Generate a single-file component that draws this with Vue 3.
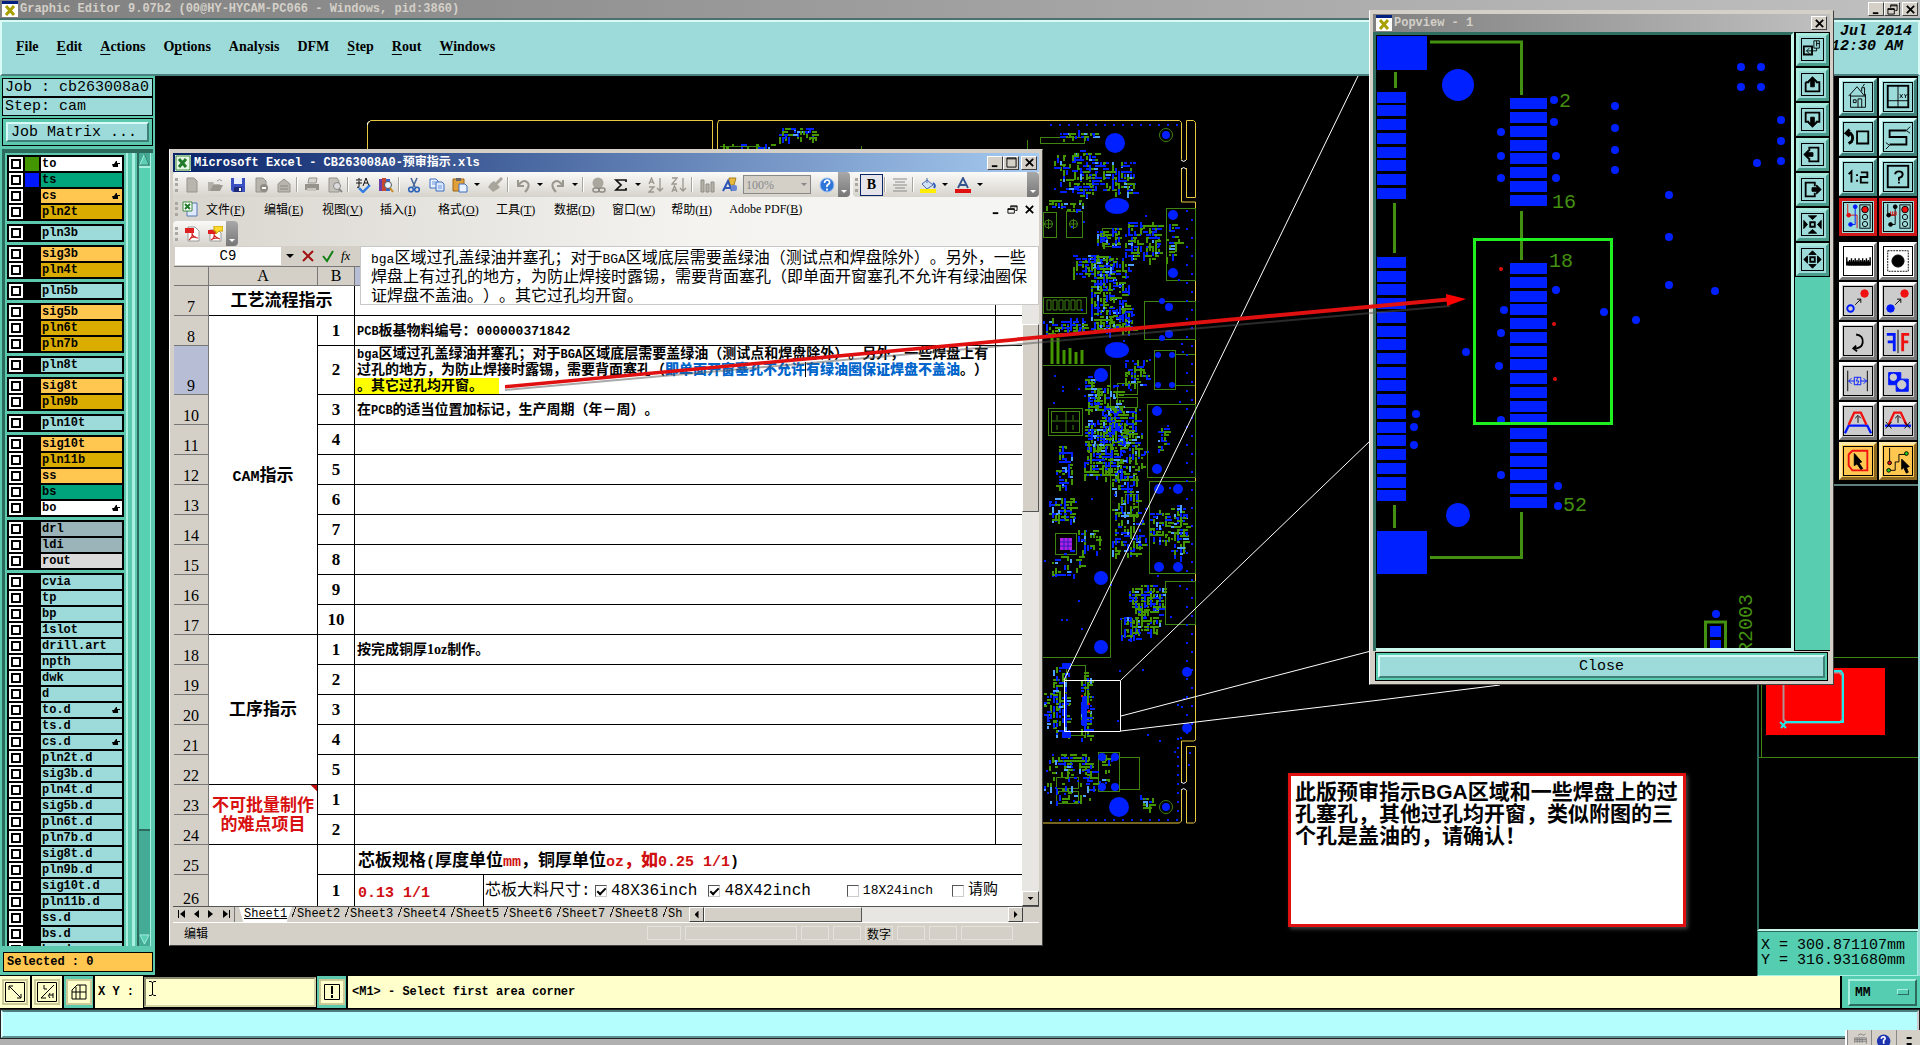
<script setup>
import { ref } from 'vue'

const menus = [
  ['', 'F', 'ile'], ['', 'E', 'dit'], ['', 'A', 'ctions'], ['O', 'p', 'tions'], ['Analysis', '', ''],
  ['DFM', '', ''], ['', 'S', 'tep'], ['', 'R', 'out'], ['', 'W', 'indows'],
]

const layerGroups = [
  [['to', 'white', 1, '#449600'], ['ts', 'green', 0, '#0018ff'], ['cs', 'amber', 1], ['pln2t', 'gold']],
  [['pln3b', 'aqua']],
  [['sig3b', 'amber'], ['pln4t', 'gold']],
  [['pln5b', 'aqua']],
  [['sig5b', 'amber'], ['pln6t', 'gold'], ['pln7b', 'gold']],
  [['pln8t', 'aqua']],
  [['sig8t', 'amber'], ['pln9b', 'gold']],
  [['pln10t', 'aqua']],
  [['sig10t', 'amber'], ['pln11b', 'gold'], ['ss', 'amber'], ['bs', 'green'], ['bo', 'white', 1]],
  [['drl', 'slate'], ['ldi', 'slate'], ['rout', 'silver']],
  ['cvia', 'tp', 'bp', '1slot', 'drill.art', 'npth', 'dwk', 'd', 'to.d', 'ts.d', 'cs.d', 'pln2t.d', 'sig3b.d',
    'pln4t.d', 'sig5b.d', 'pln6t.d', 'pln7b.d', 'sig8t.d', 'pln9b.d', 'sig10t.d', 'pln11b.d', 'ss.d', 'bs.d', 'bo.d']
    .map((n) => [n, 'aqua', n === 'to.d' || n === 'cs.d' ? 1 : 0]),
]

const page = '<path d="M3 1h7l3 3v11H3z" fill="#b8b5ae" stroke="#96938c"/>'
const icons = {
  new: page,
  open: '<path d="M1 5h5l1 2h6v7H1z" fill="#b4b1aa"/><path d="M3 14l3-6h10l-3 6z" fill="#9a978f"/><path d="M10 4q3-3 5 0" stroke="#999" fill="none"/>',
  save: '<path d="M1 1h14v14H3l-2-2z" fill="#3a4fc0"/><path d="M4 1h8v6H4z" fill="#e8ecff"/><path d="M4 10h8v5H4z" fill="#1f2a78"/><path d="M9 11h2v3H9z" fill="#fff"/>',
  perm: page + '<circle cx="11" cy="11" r="4" fill="#8e8b84"/><path d="M9 11h4" stroke="#fff" stroke-width="2"/>',
  mail: '<path d="M2 7l6-5 6 5v8H2z" fill="#b8b5ae" stroke="#96938c"/><path d="M4 9h8M4 12h8" stroke="#8a877f"/>',
  print: '<path d="M5 1h8l-1 5H4z" fill="#d8d6d0" stroke="#96938c"/><path d="M1 7h14v6H1z" fill="#96938c"/><path d="M3 11h9v3H3z" fill="#c8c5be"/>',
  preview: '<path d="M2 1h8l2 3v11H2z" fill="#c4c1ba" stroke="#96938c"/><circle cx="10" cy="9" r="3.5" fill="#ddd" stroke="#888"/><path d="M12 12l3 3" stroke="#888" stroke-width="2"/>',
  spell: '<path d="M1 3h6M4 1v2M1 6h6M4 4v6q-1 1-2 0" stroke="#111" fill="none"/><path d="M8 9l3-8 3 8M9 6h4" stroke="#111" fill="none"/><path d="M4 11l4 4 7-7" stroke="#2f7be0" stroke-width="2.4" fill="none"/>',
  research: '<path d="M1 2h3v12H1z" fill="#6b3fa8"/><path d="M4 1h4v13H4z" fill="#c8452e"/><path d="M8 2h4v12H8z" fill="#3465c8"/><circle cx="10" cy="8" r="3.5" fill="#e8f4ff" stroke="#555"/><path d="M12 11l3 4" stroke="#c88a1e" stroke-width="2"/>',
  cut: '<path d="M5 1l4 9M11 1L7 10" stroke="#4a6898" stroke-width="1.6"/><circle cx="5" cy="12.500" r="2.300" fill="none" stroke="#2b62b8" stroke-width="1.600"/><circle cx="11" cy="12.500" r="2.300" fill="none" stroke="#2b62b8" stroke-width="1.600"/>',
  copy: '<path d="M1 2h6l2 2v7H1z" fill="#eaf2ff" stroke="#3c6fc0"/><path d="M7 5h6l2 2v7H7z" fill="#dbe8ff" stroke="#3c6fc0"/><path d="M3 5h4M3 7h4M9 9h4M9 11h4" stroke="#6f98d8"/>',
  paste: '<path d="M1 2h11v12H1z" fill="#e2a03a" stroke="#9c6412"/><path d="M4 1h5v3H4z" fill="#666"/><path d="M7 7h6l2 2v6H7z" fill="#e9f1ff" stroke="#3c6fc0"/>',
  brush: '<path d="M15 1l-6 6" stroke="#a8a59d" stroke-width="3"/><path d="M4 6l3-2 6 6-2 2-5 3-5-5z" fill="#a8a59d"/>',
  undo: '<path d="M3 3v6h6M3 9q5-8 10-3 2 4-3 9" stroke="#9a978f" stroke-width="2" fill="none"/>',
  redo: '<path d="M13 3v6H7M13 9Q8 1 3 6q-2 4 3 9" stroke="#9a978f" stroke-width="2" fill="none"/>',
  link: '<circle cx="8" cy="6" r="5.500" fill="#aaa79f"/><rect x="3" y="11" width="6" height="4" rx="2" fill="none" stroke="#8d8a83" stroke-width="1.500"/><rect x="9" y="11" width="6" height="4" rx="2" fill="none" stroke="#8d8a83" stroke-width="1.500"/>',
  sigma: '<path d="M13 5V3H3l5 5-5 5h10v-2" stroke="#111" stroke-width="1.700" fill="none"/>',
  sortA: '<path d="M1 7l2.500-6L6 7M2 5h3M1 10h5l-5 5h5M12 1v13M9 11l3 3 3-3" stroke="#9a978f" stroke-width="1.300" fill="none"/>',
  sortZ: '<path d="M1 1h5L1 7h5M1 15l2.500-6L6 15M2 13h3M12 1v13M9 11l3 3 3-3" stroke="#9a978f" stroke-width="1.300" fill="none"/>',
  chart: '<path d="M2 3h3v12H2zM7 7h3v8H7zM12 5h3v10h-3z" fill="#b5b2aa" stroke="#8f8c85"/>',
  draw: '<path d="M7 1h7l-2 7H7z" fill="#e8b93c" stroke="#a88020"/><path d="M1 14l5-10 4 10M3 11h5" stroke="#2d56b8" stroke-width="2" fill="none"/><rect x="9" y="8" width="6" height="6" rx="2" fill="#6a86d0"/>',
  help: '<circle cx="8" cy="8" r="7" fill="#2f74d8" stroke="#9cc2f2"/><path d="M5.500 6q0-3 3-3 2.500.5 2 3-.5 1-2.500 2.500V10M8 11.500v2" stroke="#fff" stroke-width="1.700" fill="none"/>',
  align: '<path d="M1 2h14M3 5h10M1 8h14M3 11h10M1 14h14" stroke="#8a8a8a"/>',
  fill: '<path d="M7 1v5M2 7l5-4 6 5-6 4z" fill="#cfe0f8" stroke="#4d6ea8"/><path d="M13 6q3 2 1 5" stroke="#2d5bc0" stroke-width="2" fill="none"/><path d="M0 12h16v4H0z" fill="#ffee00"/>',
  color: '<path d="M3 11L8 1l5 10M5 8h6" stroke="#35538c" stroke-width="1.800" fill="none"/><path d="M0 12h16v4H0z" fill="#e01010"/>',
  pdf: '<path d="M4 1h7l4 4v10H4z" fill="#fff" stroke="#999"/><path d="M1 2h9v5H1z" fill="#e02020"/><path d="M8 7q1 4-3 7M8 8q2 4 6 4M6 12q3-1 6-1" stroke="#d02020" fill="none" stroke-width="1.200"/>',
  pdfMail: '<path d="M3 4h8l3 3v8H3z" fill="#fff" stroke="#999"/><path d="M1 4h8v4H1z" fill="#e02020"/><path d="M7 8q1 4-3 6M7 9q2 3 6 4M5 13q3-1 6-1" stroke="#d02020" fill="none" stroke-width="1.200"/><path d="M7 0h9v5h-4l-3 3V5H7z" fill="#ffd92e" stroke="#c8a100"/>',
}
const bar = ['grip', 'new', 'open', 'save', 'perm', 'mail', '|', 'print', 'preview', '|', 'spell', 'research', '|', 'cut',
  'copy', 'paste', 'v', 'brush', '|', 'undo', 'v', 'redo', 'v', '|', 'link', 'sigma', 'v', 'sortA', 'sortZ', '|', 'chart', 'draw']
const xlMenus = [['文件', 'F'], ['编辑', 'E'], ['视图', 'V'], ['插入', 'I'], ['格式', 'O'], ['工具', 'T'], ['数据', 'D'], ['窗口', 'W'], ['帮助', 'H'], ['Adobe PDF', 'B']]
const sheets = ['Sheet1', 'Sheet2', 'Sheet3', 'Sheet4', 'Sheet5', 'Sheet6', 'Sheet7', 'Sheet8']

const rows = []
for (let r = 10; r <= 24; r++) {
  const num = r <= 17 ? r - 7 : r <= 22 ? r - 17 : r - 22
  rows.push({
    r, num,
    head: r === 18 ? '工序指示' : r === 23 ? '不可批量制作的难点项目' : '',
    span: r === 18 ? 5 : 2,
    text: r === 18 ? '按完成铜厚1oz制作。' : '',
  })
}

const popTools = [
  ['Zoom area', '<path d="M2 8h9v9H2z" stroke-width="2"/><path d="M13 2h6v8h-6zM16 5h3M16 2v6M13 13h3v-3M13 13H5M8 10l-3 3 3 3"/>'],
  ['Pan up', '<path d="M4 9h4M15 9h4v10H4V9" stroke-width="2"/><path d="M11.500 3l5 5h-3v6h-4V8h-3z" fill="#000"/>'],
  ['Pan down', '<path d="M8 14H4V4h15v10h-4" stroke-width="2"/><path d="M11.500 20l5-5h-3V9h-4v6h-3z" fill="#000"/>'],
  ['Pan left', '<path d="M8 8V4h10v15H8v-4" stroke-width="2"/><path d="M2 11.500l5-5v3h5v4H7v3z" fill="#000"/>'],
  ['Pan right', '<path d="M14 8V4H4v15h10v-4" stroke-width="2"/><path d="M21 11.500l-5-5v3h-5v4h5v3z" fill="#000"/>'],
  ['Zoom in', '<path d="M9 9h5v5H9z" stroke-width="2"/><path d="M7 2h9l-4.500 4zM7 21h9l-4.500-4zM2 7v9l4-4.500zM21 7v9l-4-4.500z" fill="#000"/>'],
  ['Zoom out', '<path d="M9 9h5v5H9z" stroke-width="2"/><path d="M7.500 6h8l-4-4zM7.500 17h8l-4 4zM6 7.500v8l-4-4zM17 7.500v8l4-4z" fill="#000"/>'],
]

const light = '<rect x="17" y="2" width="11" height="25" fill="#9cdbda"/><circle cx="22.500" cy="7" r="3.500" fill="#f01010"/><circle cx="22.500" cy="15" r="2.800"/><circle cx="22.500" cy="22.500" r="2.800"/>'
const tools = [
  ['Home', 'aqua', '<path d="M5 14l9-10 8 10M7 12v14h16V12M7 14h16M15 26v-9h4v9M10 18h3v3h-3zM19 9V5h3v8M20 4l2-3"/>'],
  ['Overview', 'aqua', '<rect x="4" y="3" width="22" height="23" stroke-width="2"/><path d="M15 3v23M4 19h22"/><path d="M17 12l3 4M20 12l-3 4M22 12l1 2 2-2M23 14v2"/>'],
  ['Previous view', 'aqua', '<path d="M14 9h12v13H14z" stroke-width="2"/><path d="M3 11h4q4 4 1 9l-3 2M6 7l-4 4 4 3" stroke-width="3"/>'],
  ['Snake route', 'aqua', '<path d="M24 8H6v7h18v8H6" stroke-width="2"/><path d="M24 8l4-4M24 8l4 3M6 24l-4-3M6 24l-4 4"/>'],
  ['Scale', 'aqua', '<path d="M5 12l3-3v12M14 12v2M14 18v2M18 10h7v5h-7v6h8" stroke-width="2"/>'],
  ['Query', 'aqua', '<rect x="4" y="3" width="22" height="23" stroke-width="2"/><path d="M12 12q0-3 4-3t4 3-4 4v3M16 20v2" stroke-width="2"/>'],
  ['Online DRC', 'red aqua', '<path d="M4 1v12h10v14" stroke="#e01010"/><path d="M12 4v19H7" stroke="#0018ff"/><circle cx="12" cy="4" r="2" fill="#0018ff" stroke="#0018ff"/><circle cx="5" cy="13" r="2" fill="#e01010" stroke="#e01010"/><circle cx="7" cy="23" r="2" fill="#0018ff" stroke="#0018ff"/>' + light],
  ['Trace DRC', 'red aqua', '<path d="M4 1v12h8M12 4v19H7"/><path d="M7 9v4h6V9M9 9v4M11 9v4" stroke="#e01010"/><circle cx="12" cy="4" r="2" fill="#000"/><circle cx="5" cy="13" r="2" fill="#000"/><circle cx="7" cy="23" r="2" fill="#000"/>' + light],
  ['Measure', 'white', '<path d="M3 11v8h25v-8M8 12v8M12 12v8M16 12v8M20 12v8M24 12v8M6 14v6M10 14v6M14 14v6M18 14v6M22 14v6M26 14v6" stroke-width="1.500"/><path d="M3 16h25v3H3z" fill="#000"/>'],
  ['Select feature', 'white', '<path d="M4 4h22v22H4z" stroke-dasharray="2 1"/><circle cx="15" cy="15" r="6.500" fill="#000"/>'],
  ['Move', 'gray', '<path d="M12 19l6-6M14 13h4v4"/><circle cx="22" cy="7" r="4" fill="#f01010" stroke="#f01010"/><circle cx="7" cy="23" r="3.500" stroke="#0018ff" stroke-width="2"/>'],
  ['Copy', 'gray', '<path d="M12 19l6-6M14 13h4v4"/><circle cx="22" cy="7" r="4" fill="#f01010" stroke="#f01010"/><circle cx="7" cy="23" r="4" fill="#0018ff" stroke="#0018ff"/>'],
  ['Rotate', 'gray', '<path d="M13 8q8 1 7 9-1 6-9 6M13 20l-3 3 4 3" stroke-width="2"/>'],
  ['Mirror', 'gray', '<path d="M15 3v25"/><path d="M3 8h8v18M4 16h7" stroke="#0018ff" stroke-width="3"/><path d="M27 8h-7v18M26 16h-6" stroke="#f01010" stroke-width="3"/>'],
  ['Stretch', 'gray', '<path d="M4 4v22M25 4v22"/><path d="M11 11h7v8h-7zM11 15H5M18 15h7M8 12l-3 3 3 3M21 12l3 3-3 3M15 11l-2 4h3l-2 4" stroke="#0018ff"/>'],
  ['Substitute', 'gray', '<path d="M5 6h13v7h8v13H13v-7H5z" fill="#0018ff" stroke="#0018ff"/><circle cx="10" cy="11" r="3.500" fill="#ccc" stroke="#ccc"/><circle cx="19" cy="19" r="4.500" fill="#ccc" stroke="#ccc"/>'],
  ['Move line', 'gray', '<path d="M1 28l4-8h20l4 8M5 20h20" stroke="#0018ff" stroke-width="2.500"/><path d="M5 19l6-13h7l6 13" stroke="#f01010" stroke-width="2.500"/><path d="M15 17v-7M12 12l3-3 3 3"/>'],
  ['Move corner', 'gray', '<path d="M1 20h28" stroke="#0018ff" stroke-width="2.500"/><path d="M5 19l6-13h7l6 13" stroke="#f01010" stroke-width="2.500"/><path d="M15 17v-7M12 12l3-3 3 3M2 16l6 7M8 16l-6 7M22 16l6 7M28 16l-6 7"/>'],
  ['Area select', 'amber', '<path d="M9 4h16v21H9l-4-5V8z" stroke="#f01010" stroke-width="2"/><path d="M11 7l8 9-3 1 4 6-2 1-4-6-3 2z" fill="#000"/>'],
  ['Net select', 'amber', '<path d="M6 1v16M6 25h6v-9h4V8h8"/><circle cx="6" cy="17" r="2" fill="#e01010"/><circle cx="5" cy="25" r="2" fill="#20d020"/><circle cx="24" cy="7" r="2" fill="#20d020"/><path d="M19 13l8 8-3 1 2 5-2 1-3-6-2 2z" fill="#000"/>'],
]

/* Component placement of the board: seeded so that it is the same on each load */
let seed = 7
const rnd = () => (seed = (seed * 16807) % 2147483647) / 2147483647
const zones = [
  [1060, 130, 36, 8, 26], [1074, 150, 22, 44, 110], [1054, 155, 20, 36, 34], [1100, 162, 34, 30, 100], [1125, 222, 34, 36, 130],
  [1097, 228, 10, 16, 36], [1112, 228, 6, 18, 26], [1073, 255, 24, 20, 60], [1091, 256, 20, 74, 200], [1110, 258, 18, 70, 100],
  [1043, 318, 40, 16, 60], [1116, 305, 16, 26, 60], [1122, 360, 24, 24, 50], [1085, 376, 14, 34, 80], [1095, 385, 26, 30, 60],
  [1102, 408, 34, 22, 80], [1085, 420, 42, 26, 220], [1084, 444, 38, 32, 150], [1120, 430, 24, 40, 80], [1056, 446, 14, 42, 50],
  [1112, 470, 24, 46, 100], [1112, 520, 32, 34, 80], [1049, 498, 24, 22, 80], [1052, 550, 30, 26, 36], [1078, 530, 22, 22, 30],
  [1129, 585, 34, 24, 130], [1135, 608, 24, 24, 80], [1121, 617, 16, 22, 40], [1053, 664, 14, 70, 100], [1081, 672, 10, 66, 80],
  [1044, 690, 12, 36, 30], [1049, 754, 40, 18, 90], [1044, 774, 46, 28, 40], [1087, 765, 6, 26, 20], [1140, 795, 12, 12, 20],
  [779, 128, 36, 10, 50], [720, 144, 50, 4, 20], [1043, 200, 40, 10, 30],
  [1158, 428, 7, 22, 26], [1150, 510, 18, 30, 60], [1171, 505, 14, 50, 90], [1166, 224, 12, 34, 30], [1102, 755, 8, 28, 16],
]
const parts = []
for (const [x, y, w, h, n] of zones) {
  for (let i = 0; i < n; i++) {
    const c = rnd()
    const wide = rnd() > 0.5
    parts.push({
      x: x + 3 * Math.round(rnd() * w / 3), y: y + 3 * Math.round(rnd() * h / 3),
      w: wide ? 2 + Math.round(rnd() * 5) : 2, h: wide ? 2 : 2 + Math.round(rnd() * 5),
      f: c < 0.52 ? '#449600' : c < 0.9 ? '#0020ff' : '#4fa0ff',
    })
  }
}
for (let y = 210; y < 735; y += 9) parts.push({ x: y % 2 ? 1191 : 1186, y, w: 2, h: 2, f: '#0020ff' })
for (let x = 1050; x < 1182; x += 9) parts.push({ x, y: 819, w: 2, h: 2, f: '#0020ff' }, { x, y: 124, w: 2, h: 2, f: '#0020ff' })
for (let y = 738; y < 815; y += 9) parts.push({ x: 1177, y, w: 2, h: 2, f: '#0020ff' })
for (let i = 0; i < 70; i++) parts.push({ x: Math.round(1044 + rnd() * 145), y: Math.round(210 + rnd() * 590), w: 2, h: 2, f: '#0020ff' })

const discs = [
  [1115, 143, 10, 10], [1166, 135, 4, 4], [1117, 206, 12, 8], [1117, 350, 12, 8], [1101, 375, 7, 7], [1173, 215, 5, 5], [1173, 273, 5, 5],
  [1162, 301, 3, 3], [1169, 307, 4, 4], [1169, 334, 4, 4], [1162, 338, 3, 3], [1158, 355, 3, 3], [1172, 355, 3, 3], [1158, 385, 3, 3],
  [1172, 385, 3, 3], [1157, 411, 5, 5], [1157, 469, 5, 5], [1159, 489, 5, 5], [1178, 489, 5, 5], [1159, 567, 5, 5], [1178, 567, 5, 5],
  [1101, 578, 7, 7], [1101, 647, 7, 7], [1187, 672, 5, 5], [1187, 728, 5, 5], [1119, 807, 10, 10], [1166, 807, 4, 4],
  [1102, 757, 4, 4], [1115, 757, 4, 4], [1102, 787, 4, 4], [1115, 787, 4, 4],
]
const outlines = [
  [1166, 208, 29, 72], [1144, 301, 51, 38], [1154, 350, 21, 39], [1147, 404, 48, 73], [1048, 408, 34, 27], [1051, 411, 28, 21], [1043, 297, 43, 16],
  [1066, 211, 16, 26], [1043, 212, 13, 25], [1102, 228, 13, 18], [1149, 481, 46, 92], [1165, 581, 30, 43], [1066, 665, 19, 70],
  [1098, 752, 21, 39], [1119, 757, 20, 32], [1056, 777, 22, 11], [1056, 791, 22, 12], [1055, 533, 21, 21], [1117, 383, 20, 11],
  [1117, 397, 20, 10], [1125, 494, 13, 20], [1121, 618, 11, 18], [1040, 137, 44, 6],
]

const leftPads = [92, 105, 119, 133, 147, 160, 174, 188]
const midPads = [98, 112, 126, 140, 153, 167, 181, 195]
for (let i = 0; i < 18; i++) {
  leftPads.push(257 + Math.round(i * 13.72))
  midPads.push(263 + Math.round(i * 13.76))
}
const vias = [
  [1554, 100], [1554, 122], [1501, 132], [1501, 156], [1556, 156], [1501, 178], [1556, 178], [1615, 106], [1615, 128], [1615, 150],
  [1615, 170], [1741, 67], [1761, 67], [1741, 87], [1761, 87], [1781, 120], [1781, 141], [1781, 161], [1757, 163], [1669, 195],
  [1669, 237], [1669, 285], [1715, 291], [1636, 320], [1604, 312], [1556, 290], [1504, 310], [1501, 333], [1466, 352], [1499, 366],
  [1416, 414], [1414, 427], [1414, 445], [1501, 420], [1501, 475], [1558, 486], [1558, 506], [1716, 614],
]
const units = ref('MM')
const coord = ref('')
const zoom = ref('100%')
</script>

<template>
  <div class="desktop">
    <header class="app-title">
      <svg class="x-icon" viewBox="0 0 16 16"><path d="M0 0h16v16H0z" fill="#fff" /><path d="M0 0h16v3H0z" fill="#002080" /><path d="M4 5l8 9M12 5l-8 9" stroke="#a8a000" stroke-width="3" /></svg>
      <span>Graphic Editor 9.07b2 (00@HY-HYCAM-PC066 - Windows, pid:3860)</span>
      <span class="win-btns">
        <button aria-label="Minimize"><svg viewBox="0 0 12 12"><path d="M2 9h6v2H2z" /></svg></button>
        <button aria-label="Restore"><svg viewBox="0 0 12 12"><path d="M4 1h7v6H9M4 1v3M4 2h7M1 5h7v6H1zM1 6h7" fill="none" stroke="#000" /></svg></button>
        <button class="apart" aria-label="Close window"><svg viewBox="0 0 12 12"><path d="M2 2l8 8M10 2l-8 8" stroke="#000" stroke-width="2" /></svg></button>
      </span>
    </header>

    <nav class="app-menu">
      <a v-for="m in menus" :key="m.join('')" href="#">{{ m[0] }}<u v-if="m[1]">{{ m[1] }}</u>{{ m[2] }}</a>
      <div class="clock"><span>&nbsp;Jul 2014</span><span>12:30 AM</span></div>
    </nav>

    <main class="body">
      <aside class="left">
        <div class="info">Job : cb263008a0</div>
        <div class="info">Step: cam</div>
        <div class="matrix"><button>Job Matrix ...</button></div>
        <div class="layer-area">
          <div class="layer-list">
            <div v-for="(g, gi) in layerGroups" :key="gi" class="group">
              <div v-for="l in g" :key="l[0]" class="layer">
                <span class="tick"><input :id="'l-' + l[0]" type="checkbox" /></span>
                <span class="swatch" :style="{ background: l[3] || '#000' }"></span>
                <label :for="'l-' + l[0]" :class="l[1]">{{ l[0] }}
                  <svg v-if="l[2]" viewBox="0 0 8 8"><path d="M0 4h2l2-3h1v2h3v1H6v3H1z" /></svg>
                </label>
              </div>
            </div>
          </div>
          <div class="rail"></div>
          <div class="scroll">
            <svg viewBox="0 0 12 14"><path d="M6 1l5 12H1z" fill="#5cd0b4" stroke="#a8f0e0" /><path d="M6 1l5 12H1" fill="none" stroke="#1d6a58" /></svg>
            <div class="thumb"></div>
            <svg viewBox="0 0 12 12"><path d="M1 1h10L6 11z" fill="#5cd0b4" stroke="#a8f0e0" /></svg>
          </div>
        </div>
        <div class="selected">Selected : 0</div>
      </aside>

      <section class="canvas">
        <svg class="fill" aria-hidden="true">
          <g transform="translate(-155 -76)" fill="none">
            <g stroke="#e8c840">
              <path d="M367.500 823V124l3-3.500h342V823M717.500 823V124l1-3.500h461l2 2v37M1181.500 168v34h14v538l-2 1h-12v41M1181.500 790v31l-2 2H717" />
              <path d="M1186.500 160v-39.500h7l2 2v75h-9V168M1186.500 782v-35.500h9v75l-2 1.500h-7v-33" />
            </g>
            <path d="M1181 160q3 3 5 0M1181 169q3-3 5 0M1181 782q3 3 5 0M1181 790q3-3 5 0M367.500 125v-2l2-2" stroke="#fff" />
            <g stroke="#3f8410">
              <path d="M1043 365.500h67.500v292H1043M1176 354.500h19M1176 385.500h19M861.500 150v-4M1027.500 150v-10M720 146.500h40v4" />
              <rect v-for="(o, i) in outlines" :key="i" :x="o[0] + .5" :y="o[1] + .5" :width="o[2]" :height="o[3]" />
              <circle cx="1166" cy="135" r="6.500" /><circle cx="1166" cy="807" r="6.500" />
              <circle cx="1073.500" cy="224" r="4" /><circle cx="1048.500" cy="224" r="4" />
              <path d="M1069 224h9M1073.500 219v10M1044 224h9M1048.500 219v10M1066 412v20M1051 421h28M1057 415v5M1057 425v5M1073 415v5M1073 425v5" />
              <path d="M1047 300v10h4v-10zM1053 300v10h4v-10zM1059 300v10h4v-10zM1065 300v10h4v-10zM1071 300v10h4v-10zM1077 300v10h4v-10z" />
            </g>
            <path d="M1052 338v26M1058 338v26M1064 350v14M1070 348v16M1076 352v12M1082 350v14" stroke="#449600" stroke-width="3" />
            <rect v-for="(p, i) in parts" :key="'p' + i" :x="p.x" :y="p.y" :width="p.w" :height="p.h" :fill="p.f" />
            <ellipse v-for="(d, i) in discs" :key="'d' + i" :cx="d[0]" :cy="d[1]" :rx="d[2]" :ry="d[3]" fill="#0020ff" />
            <path d="M1060 538h12v12h-12z" fill="#b020e0" /><path d="M1060 542h12M1060 546h12M1064 538v12M1068 538v12" stroke="#3018c0" />
            <path d="M1062 663h9v6h-9zM1062 732h9v6h-9zM1082 696h5v30h-5zM1064 696h3v30h-3z" fill="#0020ff" />
            <path d="M1081 695h2v2h-2zM1088 703h2v2h-2zM1088 710h2v2h-2z" fill="#e01010" />
            <path d="M1064.500 680.500h56v51h-56zM1064 680L1358 76M1121 680L1371 440M1121 716L1371 651M1121 731L1380 700 1500 685" stroke="#fff" />
          </g>
        </svg>
      </section>

      <aside class="right">
        <div class="tools">
          <button v-for="t in tools" :key="t[0]" :class="t[1]" :aria-label="t[0]"><svg viewBox="0 0 30 30" v-html="t[2]"></svg></button>
        </div>
        <div class="overview">
          <svg class="fill" aria-hidden="true">
            <path d="M0 171.500h163M0 271.500h163M2.500 171v100" stroke="#3f8410" />
            <path d="M7 182h119v67H7z" fill="#ff0000" />
            <path d="M24.500 186.500h56l3 3v44l-3 3h-53l-3-3z" fill="none" stroke="#b09090" stroke-width="2" />
            <path d="M54 185h28l2 3v48H27l-5 6M21 236l6 6" fill="none" stroke="#20e8e8" stroke-width="2" />
          </svg>
        </div>
        <div class="xy"><span>X = 300.871107mm</span><span>Y = 316.931680mm</span></div>
      </aside>
    </main>

    <footer>
      <div class="prompt">
        <button class="sq" aria-label="Snap"><svg viewBox="0 0 20 20"><path d="M.5.500h19v19H.500zM4 4l12 12M4 8V4h4M12 16h4v-4" /></svg></button>
        <button class="sq" aria-label="Angle"><svg viewBox="0 0 20 20"><path d="M.5.500h19v19H.500zM17 3L4 16h5M7 3v4h3M12 13h4M13 11q-3 3 0 5M16 11v5" /></svg></button>
        <button class="sq teal" aria-label="Grid"><svg viewBox="0 0 20 20"><path d="M3 8l5-5h9v14H3zM11 3v14M7 5v12M3 10h14" /></svg></button>
        <label class="xy-label" for="xy">X Y :</label>
        <div class="xy-field">
          <input id="xy" v-model="coord" type="text" />
          <svg viewBox="0 0 7 15"><path d="M0 .5h2l1.500 1L5 .5h2M3.500 1v13M0 14.500h2l1.500-1 1.500 1h2" fill="none" stroke="#000" /></svg>
        </div>
        <button class="sq teal" aria-label="Alert"><svg viewBox="0 0 20 20"><path d="M2.500 2.500h15v15h-15z" /><path d="M10 4v8M10 13v3" stroke-width="2" /></svg></button>
        <p>&lt;M1&gt; - Select first area corner</p>
        <div class="units"><select v-model="units" aria-label="Units"><option>MM</option></select><i></i></div>
      </div>
      <div class="status"></div>
      <div class="tray">
        <svg viewBox="0 0 28 15"><path d="M8 14V8h14v7M8 10h14M8 12h14M11 8v6M14 8v6M17 8v6M12 5q3-3 5-1t4-1" fill="none" stroke="#777" /></svg>
        <svg viewBox="0 0 28 15"><circle cx="14" cy="12" r="8" fill="#1c34b0" /><path d="M11 9q1-3 4-2 2 2-1 4v4" fill="none" stroke="#fff" stroke-width="2" /></svg>
        <svg viewBox="0 0 18 15"><path d="M7 7h5v2H7zM7 13h5v2H7z" /></svg>
      </div>
    </footer>

    <section class="excel">
      <div class="xl-title">
        <svg class="x-icon" viewBox="0 0 16 16"><path d="M0 0h16v16H0z" fill="#e8f4e4" /><path d="M1 1h14v14H1z" fill="none" stroke="#3a8a3a" /><path d="M4 4l7 8M11 4l-7 8" stroke="#1f7a2a" stroke-width="3" /></svg>
        <span>Microsoft Excel - CB263008A0-预审指示.xls</span>
        <span class="win-btns">
          <button aria-label="Minimize"><svg viewBox="0 0 12 12"><path d="M2 9h6v2H2z" /></svg></button>
          <button aria-label="Maximize"><svg viewBox="0 0 12 12"><path d="M1 1h10v10H1zM1 2h10" fill="none" stroke="#000" /></svg></button>
          <button class="apart" aria-label="Close window"><svg viewBox="0 0 12 12"><path d="M2 2l8 8M10 2l-8 8" stroke="#000" stroke-width="2" /></svg></button>
        </span>
      </div>
      <div class="bars">
        <div class="toolbar">
          <div class="strip">
            <template v-for="(b, i) in bar" :key="i">
              <i v-if="b === 'grip'" class="grip"></i>
              <i v-else-if="b === '|'" class="sep"></i>
              <i v-else-if="b === 'v'" class="caret"></i>
              <button v-else class="tb" :aria-label="b"><svg viewBox="0 0 16 16" v-html="icons[b]"></svg></button>
            </template>
            <div class="zoom-box"><select v-model="zoom" aria-label="Zoom"><option>100%</option></select><i class="caret dim"></i></div>
            <button class="tb" aria-label="Help"><svg viewBox="0 0 16 16" v-html="icons.help"></svg></button>
            <i class="end"><i class="caret light"></i></i>
          </div>
          <div class="strip grow">
            <i class="grip"></i>
            <button class="bold">B</button>
            <i class="sep"></i>
            <button class="tb" aria-label="Center"><svg viewBox="0 0 16 16" v-html="icons.align"></svg></button>
            <i class="sep"></i>
            <button class="tb" aria-label="Fill colour"><svg viewBox="0 0 16 16" v-html="icons.fill"></svg></button>
            <i class="caret"></i>
            <button class="tb" aria-label="Font colour"><svg viewBox="0 0 16 16" v-html="icons.color"></svg></button>
            <i class="caret"></i>
            <i class="end last"><i class="caret light"></i></i>
          </div>
        </div>
        <nav class="xl-menu">
          <i class="grip"></i>
          <svg class="x-icon" viewBox="0 0 16 16"><path d="M5 2h10v13H5z" fill="#dfe9ff" stroke="#5878b0" /><path d="M1 1h9v9H1z" fill="#fff" stroke="#3a8a3a" /><path d="M3 3l5 5M8 3L3 8" stroke="#1f7a2a" stroke-width="2" /></svg>
          <a v-for="m in xlMenus" :key="m[1]" href="#">{{ m[0] }}(<u>{{ m[1] }}</u>)</a>
          <span class="doc-btns">
            <svg viewBox="0 0 12 12"><path d="M3 9h6v2H3z" /></svg>
            <svg viewBox="0 0 12 12"><path d="M4 2h7v5H9M4 2v2M1 5h7v5H1zM1 6h7M4 3h7" fill="none" stroke="#000" /></svg>
            <svg viewBox="0 0 12 12"><path d="M2 2l8 8M10 2l-8 8" stroke="#000" stroke-width="2" /></svg>
          </span>
        </nav>
        <div class="pdf-bar">
          <div class="strip">
            <i class="grip"></i>
            <button class="tb" aria-label="Convert to PDF"><svg viewBox="0 0 16 16" v-html="icons.pdf"></svg></button>
            <button class="tb" aria-label="Convert and review"><svg viewBox="0 0 16 16" v-html="icons.pdfMail"></svg></button>
            <i class="end"><i class="caret light"></i></i>
          </div>
        </div>
      </div>
      <div class="formula">
        <input type="text" value="C9" aria-label="Name box" />
        <i class="caret"></i>
        <svg viewBox="0 0 16 16"><path d="M3 3l10 10M13 3L3 13" stroke="#a01010" stroke-width="2" /></svg>
        <svg viewBox="0 0 16 16"><path d="M3 8l4 5 6-10" stroke="#108010" stroke-width="2" fill="none" /></svg>
        <em>fx</em>
        <div class="entry"><span class="m13">bga</span>区域过孔盖绿油并塞孔；对于<span class="m13">BGA</span>区域底层需要盖绿油（测试点和焊盘除外）。另外，一些<br />焊盘上有过孔的地方，为防止焊接时露锡，需要背面塞孔（即单面开窗塞孔不允许有绿油圈保<br />证焊盘不盖油。）。其它过孔均开窗。</div>
      </div>
      <div class="sheet">
        <div class="grid">
          <table>
            <colgroup><col class="c0" /><col class="ca" /><col class="cb" /><col class="cc" /><col class="cd" /><col class="ce" /></colgroup>
            <thead><tr><th></th><th>A</th><th>B</th><th class="on" colspan="2"></th><th></th></tr></thead>
            <tbody>
              <tr><th>7</th><td class="head" colspan="2">工艺流程指示</td><td colspan="2"></td><td></td></tr>
              <tr><th>8</th><td class="head" rowspan="10"><span class="m15">CAM</span>指示</td><td class="num">1</td><td class="txt" colspan="2"><span class="m12">PCB</span>板基物料编号：<span class="m13">000000371842</span></td><td></td></tr>
              <tr class="r9"><th class="on">9</th><td class="num">2</td>
                <td class="txt" colspan="2"><span class="m12">bga</span>区域过孔盖绿油并塞孔；对于<span class="m12">BGA</span>区域底层需要盖绿油（测试点和焊盘除外）。另外，一些焊盘上有<br />过孔的地方，为防止焊接时露锡，需要背面塞孔（<b>即单面开窗塞孔不允许<i></i>有绿油圈保证焊盘不盖油</b>。）<br /><mark>。其它过孔均开窗。</mark></td><td></td></tr>
              <template v-for="w in rows" :key="w.r">
                <tr>
                  <th>{{ w.r }}</th>
                  <td v-if="w.head" class="head" :class="{ warn: w.r === 23 }" :rowspan="w.span">{{ w.head }}</td>
                  <td class="num">{{ w.num }}</td>
                  <td v-if="w.r === 10" class="txt" colspan="2">在<span class="m12">PCB</span>的适当位置加标记，生产周期（年－周）。</td>
                  <td v-else class="txt" colspan="2">{{ w.text }}</td>
                  <td></td>
                </tr>
              </template>
              <tr><th>25</th><td rowspan="2"></td><td></td><td class="spec" colspan="3">芯板规格<span>(</span>厚度单位<span class="red">mm</span>，铜厚单位<span class="red">oz</span><b>，如</b><span class="red">0.25 1/1</span><span>)</span></td></tr>
              <tr class="r26"><th>26</th><td class="num">1</td><td class="spec"><span class="red">0.13 1/1</span></td>
                <td class="sizes" colspan="2"><div>
                  <span>芯板大料尺寸:</span>
                  <label><input type="checkbox" checked />48X36inch</label>
                  <label><input type="checkbox" checked />48X42inch</label>
                  <label class="small"><input type="checkbox" />18X24inch</label>
                  <label class="cjk"><input type="checkbox" />请购</label>
                </div></td></tr>
            </tbody>
          </table>
        </div>
        <div class="vscroll"><div class="vthumb"></div><span class="dots"></span><button aria-label="Scroll down"><i class="caret"></i></button></div>
      </div>
      <div class="tabs">
        <span class="nav"><svg viewBox="0 0 60 14"><path d="M5 3v8h1V3zM12 3v8L7 7zM26 3v8l-5-4zM35 3v8l5-4zM50 3v8l5-4zM56 3v8h1V3z" /></svg></span>
        <div class="tab-list"><a v-for="(s, i) in sheets" :key="s" href="#" :class="{ active: i === 0 }">{{ s }}</a><a href="#">Sh</a></div>
        <div class="hscroll"><button aria-label="Scroll left"><i class="caret to-left"></i></button><div class="hthumb"></div><span class="dots"></span><button aria-label="Scroll right"><i class="caret to-right"></i></button></div>
      </div>
      <div class="xl-status"><span>编辑</span><i class="f1"></i><i class="f2"></i><i></i><i></i><i class="k">数字</i><i></i><i></i><i class="f3"></i></div>
    </section>

    <section class="pop">
      <div class="pop-title">
        <svg class="x-icon" viewBox="0 0 16 16"><path d="M0 0h16v16H0z" fill="#fff" /><path d="M0 0h16v3H0z" fill="#002080" /><path d="M4 5l8 9M12 5l-8 9" stroke="#a8a000" stroke-width="3" /></svg>
        <span>Popview - 1</span>
        <span class="win-btns"><button aria-label="Close popview"><svg viewBox="0 0 12 12"><path d="M2 2l8 8M10 2l-8 8" stroke="#000" stroke-width="2" /></svg></button></span>
      </div>
      <div class="pop-body">
        <div class="pop-view">
          <svg class="fill">
            <g transform="translate(-1376 -35)">
              <g fill="#0020ff">
                <path d="M1377 36h50v34h-50zM1377 531h50v43h-50zM1710 626h11v11h-11zM1710 640h11v11h-11z" />
                <circle cx="1458" cy="85" r="16" /><circle cx="1458" cy="515" r="12" />
                <rect v-for="y in leftPads" :key="'l' + y" x="1377" :y="y" width="29" height="11" />
                <rect v-for="y in midPads" :key="'m' + y" x="1510" :y="y" width="37" height="11" />
                <circle v-for="(v, i) in vias" :key="i" :cx="v[0]" :cy="v[1]" r="4" />
              </g>
              <path d="M1430 42h91.500v53M1395.500 72v16M1394.500 203v50M1394.500 505v23M1521.500 211v49M1430 557.500h91.500V512M1705.500 652v-30h20v30" fill="none" stroke="#449010" stroke-width="3" />
              <g fill="#449010" class="silk">
                <text x="1559" y="107">2</text><text x="1552" y="208">16</text><text x="1549" y="267">18</text><text x="1563" y="511">52</text>
                <text transform="translate(1752 654) rotate(-90)">R2003</text>
              </g>
              <g fill="#e01010"><circle cx="1501" cy="269" r="2" /><circle cx="1554" cy="324" r="2" /><circle cx="1555" cy="379" r="2" /></g>
              <path d="M1474.500 239.500h137v184h-137z" fill="none" stroke="#20f020" stroke-width="3" />
            </g>
          </svg>
        </div>
        <div class="pop-tools">
          <button v-for="t in popTools" :key="t[0]" :aria-label="t[0]"><svg viewBox="0 0 23 23" v-html="t[1]"></svg></button>
        </div>
      </div>
      <div class="pop-close"><button>Close</button></div>
    </section>

    <div class="note">此版预审指示BGA区域和一些焊盘上的过<br />孔塞孔，其他过孔均开窗，类似附图的三<br />个孔是盖油的，请确认！</div>

    <svg class="arrow" aria-hidden="true">
      <path d="M505 390L1450 306" stroke="#555" stroke-width="2" opacity=".5" />
      <path d="M505 385L1448 297.500v4L505 388.500z" fill="#e01010" />
      <path d="M1446 294l20 5-19 7z" fill="#ff0000" />
    </svg>
  </div>
</template>

<style>
body { background: #000; overflow: hidden; }
</style>

<style scoped>
* { box-sizing: border-box; }
.desktop { position: relative; display: flex; flex-direction: column; height: 100vh; overflow: hidden; background: #000; font-family: "Liberation Mono", "Noto Sans CJK SC", monospace; color: #000; text-spacing-trim: space-all; }
a { color: inherit; text-decoration: none; }
button { padding: 0; font: inherit; color: inherit; display: flex; align-items: center; justify-content: center; flex: none; }
i { font-style: normal; flex: none; }
.fill { position: absolute; inset: 0; width: 100%; height: 100%; }
.x-icon { width: 16px; height: 16px; flex: none; }
.win-btns { display: flex; margin-left: auto; }
.win-btns button { width: 16px; height: 14px; background: #d4d0c8; border: 1px solid; border-color: #fff #404040 #404040 #fff; }
.win-btns svg { width: 11px; height: 11px; }
.win-btns .apart { margin-left: 2px; }

.app-title { flex: none; height: 20px; display: flex; align-items: center; gap: 2px; padding: 0 2px; font-size: 12px; font-weight: bold; color: #d4d0c8; background: linear-gradient(90deg, #808080, #c0c0c0); border-bottom: 2px solid #4c706e; white-space: nowrap; }
.app-menu { flex: none; height: 56px; display: flex; align-items: center; gap: 18px; padding: 0 4px 2px 14px; background: #9cdbda; border: 2px solid; border-color: #d8fbf8 #d8fbf8 #4c807e #d8fbf8; font: bold 14px "Liberation Serif", serif; }
.app-menu u { text-underline-offset: 3px; }
.clock { margin-left: auto; width: 83px; height: 46px; display: flex; flex-direction: column; font: italic bold 15px/15px "Liberation Mono", monospace; }

.body { flex: 1; min-height: 0; display: flex; }
.left { flex: none; width: 155px; margin-bottom: 1px; padding: 2px 2px 3px; background: #5cc8ae; display: flex; flex-direction: column; }
.info { height: 19px; border: 1px solid #000; background: #9cdbda; font-size: 15px; line-height: 17px; padding-left: 2px; white-space: nowrap; }
.matrix { margin: 2px 0 3px; padding: 3px; border: 1px solid #000; height: 28px; }
.matrix button { width: 100%; height: 20px; justify-content: flex-start; padding-left: 3px; font-size: 15px; background: #9cdbda; border: 2px solid; border-color: #d8fbf8 #3f8078 #3f8078 #d8fbf8; }
.layer-area { flex: 1; min-height: 0; display: flex; margin-bottom: 6px; border-top: 4px solid #2b6a5c; }
.layer-list { width: 124px; overflow: hidden; padding: 2px 0 0 2px; border-left: 3px solid #2b6a5c; display: flex; flex-direction: column; gap: 3px; }
.group { flex: none; width: 117px; background: #000; padding: 2px; display: flex; flex-direction: column; gap: 2px; }
.layer { display: flex; gap: 2px; height: 14px; }
.tick { width: 14px; background: #fff; display: flex; align-items: center; justify-content: center; }
.tick input { appearance: none; margin: 0; width: 10px; height: 10px; border: 2px solid #000; background: #fff; }
.swatch { width: 14px; }
.layer label { flex: 1; display: flex; justify-content: space-between; align-items: center; padding: 0 2px 0 1px; font-size: 12px; font-weight: bold; line-height: 14px; }
.layer label svg { width: 8px; height: 8px; }
.white { background: #fff; } .green { background: #00a47c; } .amber { background: #ffc650; } .gold { background: #dbac00; }
.aqua { background: #9cdbda; } .slate { background: #9ab4ba; } .silver { background: #dadada; }
.rail { width: 9px; margin-right: 2px; border-left: 2px solid #a8f0e0; border-right: 3px solid #a8f0e0; }
.scroll { width: 14px; display: flex; flex-direction: column; border-left: 2px solid #2b6a5c; background: #44ac96; border-right: 1px solid #a8f0e0; }
.scroll svg { width: 11px; height: 13px; flex: none; }
.thumb { flex: 1; margin-bottom: 102px; background: #58d0b2; border-top: 2px solid #a8f0e0; border-bottom: 2px solid #2b6a5c; }
.selected { height: 20px; flex: none; border: 1px solid #000; background: #ffc650; font-size: 12px; font-weight: bold; line-height: 18px; padding-left: 3px; margin: 0 0 0 1px; }

.canvas { flex: 1; position: relative; overflow: hidden; }
.right { flex: none; width: 163px; display: flex; flex-direction: column; padding-right: 2px; background: #9cdbda; }
.tools { display: grid; grid-template-columns: 38px 38px; justify-content: end; gap: 2px; padding: 2px 1px 4px; background: #000; border-bottom: 2px solid #5f7f7c; }
.tools button { height: 38px; border: 3px solid; border-color: #d8fbf8 #3f8078 #3f8078 #d8fbf8; }
.tools button:nth-child(9), .tools button:nth-child(10) { margin-top: 4px; }
.tools svg { width: 30px; height: 30px; fill: none; stroke: #000; border: 1px solid #000; }
.tools .white, .tools .gray { border-color: #fff #777 #777 #fff; }
.gray { background: #ccc; }
.tools .amber { border-color: #ffe8a8 #8c6820 #8c6820 #ffe8a8; }
.tools .red { border-color: #d01818; }
.overview { flex: 1; position: relative; background: #000; border-left: 2px solid #2b6a5c; border-bottom: 2px solid #c8f8ec; }
.xy { height: 45px; background: #55cdb0; border: 1px solid; border-color: #2b6a5c #a8f0e0 #a8f0e0 #2b6a5c; padding: 6px 0 0 3px; display: flex; flex-direction: column; font-size: 15px; line-height: 15px; }

footer { flex: none; position: relative; height: 69px; background: #b0b0b0; }
.prompt { height: 33px; display: flex; background: #ffffcc; border-bottom: 1px solid #000; }
.sq { width: 32px; background: #ffffcc; border: 0; border-right: 2px solid #000; }
.sq svg { width: 26px; height: 26px; padding: 1px; fill: none; stroke: #000; border: 2px solid #ccca98; background: #ffffcc; }
.sq.teal { background: #5cc8ae; width: 31px; }
.xy-label { width: 48px; padding-left: 3px; font-size: 12px; font-weight: bold; line-height: 32px; white-space: nowrap; }
.xy-field { position: relative; width: 174px; display: flex; }
.xy-field svg { position: absolute; left: 6px; top: 5px; width: 7px; height: 15px; }
.prompt input { width: 100%; border: 3px solid; border-color: #8c8c70 #d8d6a8 #d8d6a8 #8c8c70; outline: 1px solid #000; outline-offset: -1px; background: #ffffcc; margin: 0; padding: 0 4px; font: 14px "Liberation Mono", monospace; }
.prompt p { flex: 1; margin: 0; padding-left: 4px; border-right: 2px solid #000; font-size: 12px; font-weight: bold; line-height: 32px; }
.units { width: 78px; padding: 3px 3px 3px 6px; background: #55cdb0; display: flex; align-items: center; }
.units select { appearance: none; width: 100%; height: 27px; padding: 0 5px; font: bold 13px "Liberation Mono", monospace; background: #55cdb0; border: 2px solid; border-color: #a8f0e0 #2b6a5c #2b6a5c #a8f0e0; border-radius: 0; }
.units i { width: 12px; height: 6px; margin-left: -20px; margin-right: 8px; border: 1px solid; border-color: #a8f0e0 #2b6a5c #2b6a5c #a8f0e0; }
.status { height: 30px; background: #b4fffd; border: 3px solid; border-color: #4c8080 #ccc #5f8f8f #dffffe; outline: 1px solid #222; outline-offset: -1px; }
.tray { position: absolute; right: 0; bottom: 0; width: 75px; height: 15px; display: flex; background: #d4d0c8; border-left: 2px solid #fff; }
.tray svg { height: 15px; flex: 1; border-left: 1px solid #888; }

.excel { position: absolute; left: 169px; top: 149px; width: 874px; height: 797px; padding: 3px; background: #d4d0c8; border: 1px solid; border-color: #d4d0c8 #404040 #404040 #fff; display: flex; flex-direction: column; }
.xl-title { height: 19px; flex: none; display: flex; align-items: center; gap: 3px; padding: 0 2px; color: #fff; font-weight: bold; font-size: 12px; line-height: 18px; background: linear-gradient(90deg, #0a246a, #a6caf0); white-space: nowrap; }
.bars { flex: none; height: 74px; background: linear-gradient(90deg, #d8d5ce, #f4f3f0 60%, #f5f5f3); }
.toolbar { display: flex; height: 25px; gap: 3px; }
.strip { display: flex; align-items: center; height: 25px; background: linear-gradient(#fafaf8, #d6d3cc); border-radius: 4px; }
.grow { flex: 1; }
.grip { width: 3px; margin: 0 2px; height: 14px; border-left: 3px dotted #aaa8a0; }
.tb { width: 23px; height: 22px; border: 0; background: none; }
.tb svg { width: 16px; height: 16px; fill: none; }
.sep { width: 2px; height: 15px; margin: 0 2px 0 1px; background: #a8a59d; border-right: 1px solid #fff; }
.caret { width: 6px; height: 3px; margin: 0 3px; background: #000; clip-path: polygon(0 0, 100% 0, 50% 100%); }
.caret.dim { background: #888; margin-left: -10px; }
.caret.light { background: #fff; }
.caret.to-left, .caret.to-right { width: 4px; height: 8px; clip-path: polygon(100% 0, 100% 100%, 0 50%); }
.caret.to-right { clip-path: polygon(0 0, 100% 50%, 0 100%); }
.end { width: 12px; height: 25px; display: flex; align-items: flex-end; padding-bottom: 4px; background: linear-gradient(#a8a8a8, #777); border-radius: 0 4px 4px 0; }
.end .caret { margin: 0 3px; }
.end.last { margin-left: auto; }
.zoom-box { display: flex; align-items: center; width: 70px; margin: 0 2px; }
.zoom-box select { appearance: none; width: 68px; flex: none; height: 19px; padding: 0 2px; border: 1px solid #888; border-radius: 0; background: #d4d0c8; color: #888; font: 12px "Liberation Serif", serif; }
.bold { width: 23px; height: 22px; border: 1px solid #0a246a; background: #e4e4ea; font: bold 14px "Liberation Serif", serif; }
.xl-menu { display: flex; align-items: center; height: 24px; font: 12px "Liberation Serif", "Noto Sans CJK SC", serif; gap: 16px; white-space: nowrap; }
.xl-menu a { min-width: 42px; }
.xl-menu .grip { margin-right: -12px; }
.xl-menu .x-icon { margin-right: -8px; }
.doc-btns { margin-left: auto; display: flex; gap: 6px; padding-right: 4px; }
.doc-btns svg { width: 11px; height: 11px; }
.pdf-bar { display: flex; }

.formula { position: relative; z-index: 2; flex: none; height: 20px; display: flex; align-items: center; padding-left: 2px; }
.formula input { width: 106px; height: 18px; border: 0; margin: 0; padding: 0; text-align: center; font: 14px "Liberation Mono", monospace; background: #fff; }
.formula .caret { width: 8px; height: 4px; margin: 0 6px 0 5px; }
.formula svg { width: 16px; height: 16px; margin-right: 4px; }
.formula em { font: italic 13px "Liberation Serif", serif; padding-left: 1px; }
.entry { position: absolute; left: 187px; right: 0; top: 0; height: 59px; padding: 0 0 0 10px; background: #fff; border: 1px solid #c8c8c8; font: 16px/19px "Noto Sans CJK SC", sans-serif; white-space: nowrap; }
.m12, .m13, .m15 { font-family: "Liberation Mono", monospace; font-size: 12px; line-height: 1; }
.m13 { font-size: 13px; } .m15 { font-size: 15px; }

.sheet { flex: 1; min-height: 0; display: flex; padding-left: 1px; }
.grid { flex: none; width: 848px; overflow: hidden; background: #fff; }
table { table-layout: fixed; width: 848px; border-collapse: separate; border-spacing: 0; }
.c0 { width: 35px; } .ca { width: 109px; } .cb { width: 37px; } .cc { width: 129px; } .cd { width: 512px; } .ce { width: 26px; }
th, td { padding: 0; height: 30px; border-right: 1px solid #000; border-bottom: 1px solid #000; }
td:last-child { border-right: 0; }
th { background: #d4d0c8; border-color: #777; font: 16px/16px "Liberation Serif", serif; vertical-align: bottom; }
thead th { height: 20px; border-top: 1px solid #777; vertical-align: middle; }
th.on { background: #b6bdd4; }
.r9 td, .r9 th { height: 49px; }
.r26 td, .r26 th { height: 33px; }
.head { font: bold 17px/19px "Liberation Serif", "Noto Sans CJK SC", serif; text-align: center; vertical-align: middle; }
.head.warn { color: #d81010; padding: 0 3px; background: linear-gradient(225deg, #c01010 4px, transparent 5px); }
.num { font: bold 17px "Liberation Serif", serif; text-align: center; }
.txt { font: bold 14px/16px "Liberation Serif", "Noto Sans CJK SC", serif; padding-left: 2px; white-space: nowrap; }
.txt b { color: #0066cc; }
.txt b i { border-left: 1px solid #000; }
mark { display: inline-block; width: 144px; margin-left: -2px; padding-left: 2px; background: #ff0; height: 16px; }
.spec { font: bold 17px/20px "Noto Sans CJK SC", sans-serif; padding-left: 3px; white-space: nowrap; }
.spec span { font: bold 15px "Liberation Mono", monospace; }
.spec .red, .spec b { color: #d01010; }
.sizes div { display: flex; align-items: center; font: 16px/20px "Liberation Mono", "Noto Sans CJK SC", monospace; padding-left: 1px; white-space: nowrap; }
.sizes span { width: 110px; }
.sizes label { display: flex; align-items: center; gap: 4px; margin-right: 11px; }
.sizes .small { font-size: 13px; margin-left: 25px; margin-right: 19px; }
.sizes .cjk { font-size: 15px; margin-right: 0; }
.sizes input { appearance: none; width: 12px; height: 12px; margin: 0; border: 1px solid; border-color: #555 #ccc #ccc #555; background: #fff; }
.sizes input:checked::after { content: ""; display: block; width: 7px; height: 3px; margin: 2px 1px; border: solid #000; border-width: 0 0 2px 2px; rotate: -45deg; }
.dots { flex: 1; background: #e8e6e2; }
.vscroll { flex: 1; display: flex; flex-direction: column; padding-top: 58px; background: #e8e6e2; }
.vthumb { height: 188px; background: #d4d0c8; border: 1px solid; border-color: #fff #555 #555 #fff; }
.vscroll button, .hscroll button { height: 15px; background: #d4d0c8; border: 1px solid; border-color: #fff #404040 #404040 #fff; }
.tabs { flex: none; height: 16px; display: flex; font-size: 12px; line-height: 15px; border-top: 1px solid #555; }
.nav { width: 62px; border-right: 1px solid #777; }
.nav svg { width: 60px; height: 14px; display: block; }
.tab-list { flex: 1; display: flex; overflow: hidden; padding-left: 4px; }
.tab-list a { flex: none; width: 53px; padding-left: 5px; background: linear-gradient(110deg, transparent 3px, #222 3px, #222 4px, transparent 4px); }
.tab-list .active { background: #fff; text-decoration: underline; clip-path: polygon(0 0, 100% 0, 90% 100%, 8% 100%); }
.hscroll { width: 350px; display: flex; padding-right: 16px; }
.hscroll button { width: 15px; }
.hthumb { width: 158px; background: #d4d0c8; border: 1px solid; border-color: #fff #555 #555 #fff; }
.xl-status { flex: none; height: 20px; display: flex; align-items: center; gap: 4px; padding: 0 26px 0 11px; font: 12px "Noto Sans CJK SC", sans-serif; border-top: 1px solid #fff; }
.xl-status span { margin-right: auto; }
.xl-status i { width: 28px; height: 14px; line-height: 13px; border: 1px solid #e4e2dc; text-align: center; }
.xl-status .f1 { width: 34px; } .xl-status .f2 { width: 112px; } .xl-status .f3 { width: 52px; }

.pop { position: absolute; right: 86px; top: 10px; width: 465px; height: 675px; padding: 3px; background: #d4d0c8; border: 1px solid; border-color: #d4d0c8 #404040 #404040 #fff; display: flex; flex-direction: column; }
.pop-title { height: 18px; flex: none; display: flex; align-items: center; gap: 2px; padding: 0 3px; font-size: 12px; font-weight: bold; color: #d4d0c8; background: linear-gradient(90deg, #808080, #c0c0c0); }
.pop-body { flex: 1; min-height: 0; display: flex; background: #58cdb0; border-left: 3px solid #2f6e60; }
.pop-view { position: relative; flex: 1; background: #000; border-top: 3px solid #2f6e60; border-right: 3px solid #c8f8ec; border-bottom: 3px solid #c8f8ec; overflow: hidden; }
.silk { font: 20px "Liberation Mono", monospace; }
.pop-tools { width: 36px; border-left: 1px solid #000; border-bottom: 1px solid #000; }
.pop-tools button { width: 35px; height: 35px; background: #9cdbda; border: 4px solid; border-color: #a8eadc #4a9c8a #4a9c8a #a8eadc; outline: 1px solid #000; outline-offset: -1px; }
.pop-tools svg { width: 23px; height: 23px; fill: none; stroke: #000; border: 1px solid #000; }
.pop-close { flex: none; height: 29px; padding: 2px; background: #58cdb0; border: 1px solid #000; margin: 1px 2px 0; }
.pop-close button { width: 100%; height: 100%; font-size: 15px; background: #9cdbda; border: 2px solid; border-color: #d8fbf8 #3f8078 #3f8078 #d8fbf8; }

.note { position: absolute; left: 1288px; top: 773px; width: 398px; height: 154px; padding: 5px 0 0 4px; background: #fff; border: 3px solid #e01010; box-shadow: 2px 2px 4px #444; font: bold 21px/22px "Liberation Sans", "Noto Sans CJK SC", sans-serif; white-space: nowrap; }
.arrow { position: absolute; inset: 0; width: 100%; height: 100%; pointer-events: none; }
</style>
